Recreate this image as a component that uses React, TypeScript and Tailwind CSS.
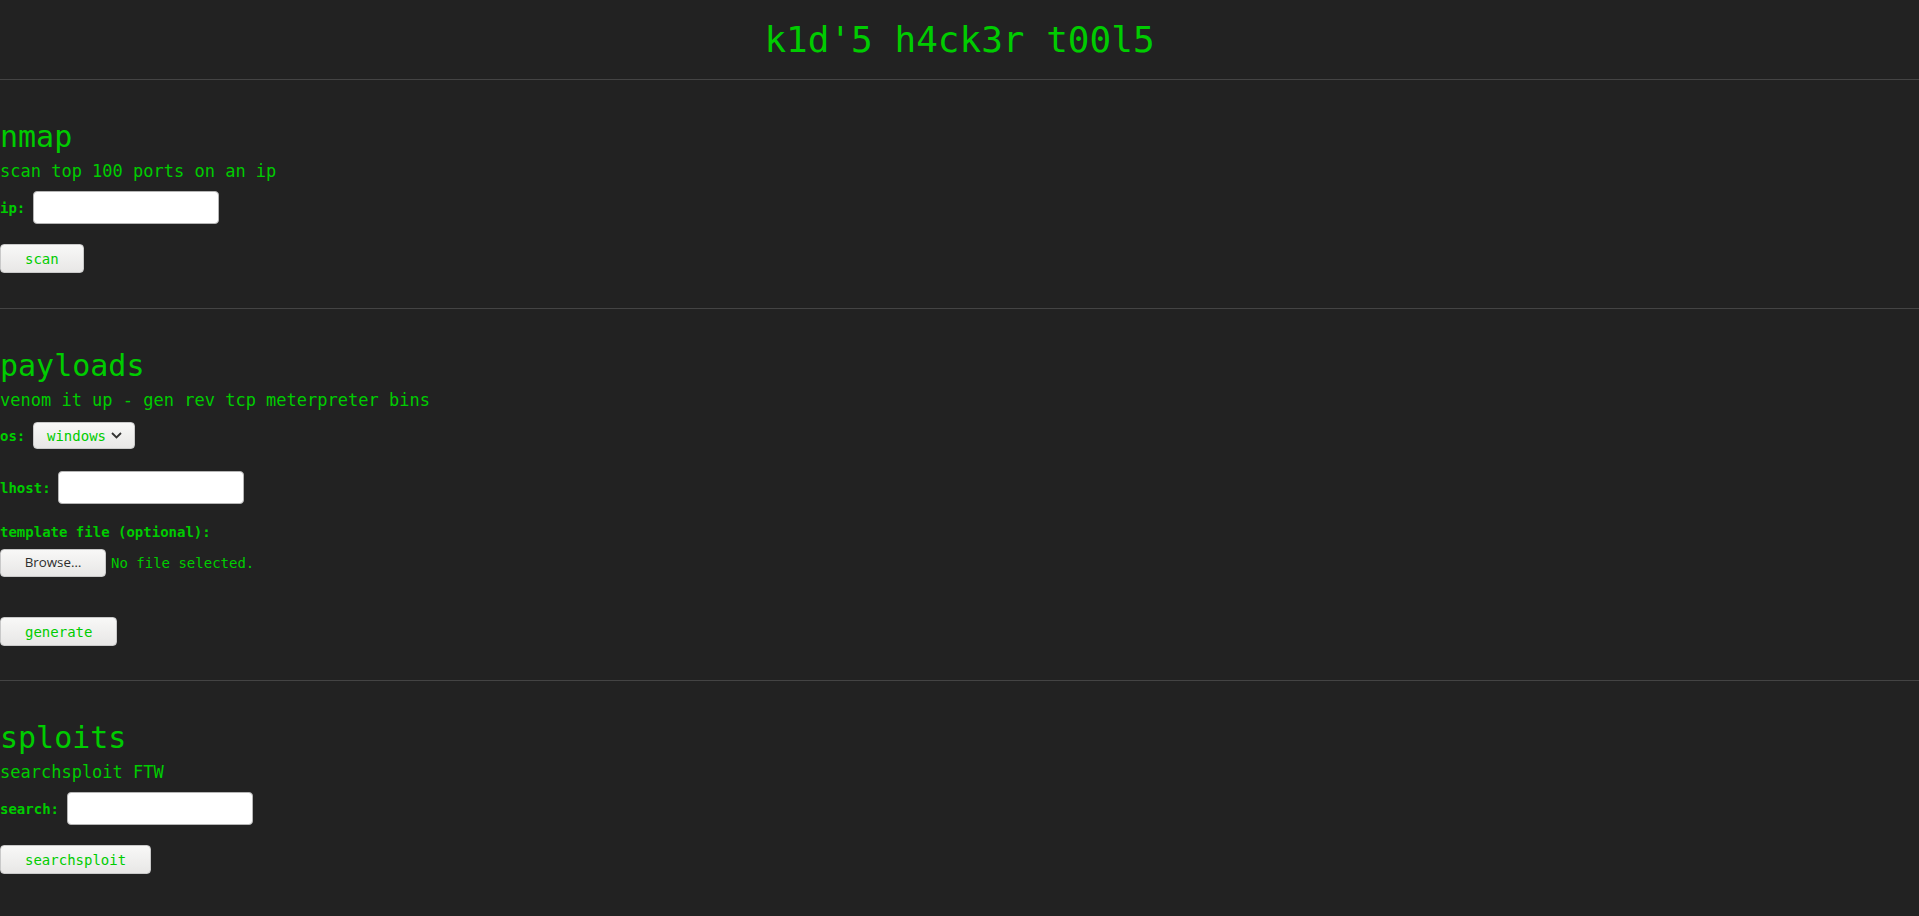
import React from "react";

function Btn({ label }: { label: string }) {
  return (
    <button className="h-[29px] px-[24px] rounded-[4px] border border-[#c9c9c9] bg-gradient-to-b from-[#f8f8f7] to-[#e8e7e6] text-[14px] leading-none text-[#00cc00] font-['DejaVu_Sans_Mono',monospace]">
      {label}
    </button>
  );
}

function TextInput() {
  return (
    <input
      type="text"
      className="h-[33px] w-[186px] rounded-[4px] border border-[#b5b5b5] bg-white px-2 text-[14px] text-black outline-none"
    />
  );
}

function Label({ text, className }: { text: string; className?: string }) {
  return <div className={"text-[14px] font-bold leading-[16px] " + (className ?? "")}>{text}</div>;
}

export default function App() {
  return (
    <div className="min-h-screen bg-[#222222] text-[#00cc00] font-['DejaVu_Sans_Mono',monospace]">
      <header className="h-[80px] border-b border-[#444444] flex items-center justify-center">
        <h1 className="text-[36px] leading-[42px] font-normal">k1d'5 h4ck3r t00l5</h1>
      </header>

      {/* nmap */}
      <section className="pt-[39px] pb-[35px] border-b border-[#444444]">
        <h2 className="text-[30px] leading-[35px]">nmap</h2>
        <p className="mt-[7px] text-[17px] leading-[20px]">scan top 100 ports on an ip</p>
        <div className="mt-[10px] flex items-center">
          <Label text="ip:" className="w-[33px]" />
          <TextInput />
        </div>
        <div className="mt-[20px] flex">
          <Btn label="scan" />
        </div>
      </section>

      {/* payloads */}
      <section className="pt-[39px] pb-[34px] border-b border-[#444444]">
        <h2 className="text-[30px] leading-[35px]">payloads</h2>
        <p className="mt-[7px] text-[17px] leading-[20px]">venom it up - gen rev tcp meterpreter bins</p>
        <div className="mt-[12px] flex items-center">
          <Label text="os:" className="w-[33px]" />
          <div className="h-[27px] w-[102px] rounded-[4px] border border-[#c9c9c9] bg-gradient-to-b from-[#f8f8f7] to-[#e8e7e6] flex items-center pl-[13px] pr-[12px] justify-between">
            <span className="text-[14px] leading-none">windows</span>
            <svg width="11" height="7" viewBox="0 0 11 7" fill="none">
              <path d="M1 1l4.5 4.5L10 1" stroke="#333" strokeWidth="1.8" />
            </svg>
          </div>
        </div>
        <div className="mt-[22px] flex items-center">
          <Label text="lhost:" className="w-[58px]" />
          <TextInput />
        </div>
        <Label text="template file (optional):" className="mt-[20px]" />
        <div className="mt-[9px] flex items-center">
          <div className="h-[28px] w-[106px] rounded-[4px] border border-[#c9c9c9] bg-gradient-to-b from-[#f8f8f7] to-[#e8e7e6] flex items-center justify-center text-[13.33px] text-[#2e2e2e] font-['Open_Sans',sans-serif]">
            Browse…
          </div>
          <span className="ml-[5px] text-[14px] leading-[16px]">No file selected.</span>
        </div>
        <div className="mt-[40px] flex">
          <Btn label="generate" />
        </div>
      </section>

      {/* sploits */}
      <section className="pt-[39px] pb-[35px]">
        <h2 className="text-[30px] leading-[35px]">sploits</h2>
        <p className="mt-[7px] text-[17px] leading-[20px]">searchsploit FTW</p>
        <div className="mt-[10px] flex items-center">
          <Label text="search:" className="w-[67px]" />
          <TextInput />
        </div>
        <div className="mt-[20px] flex">
          <Btn label="searchsploit" />
        </div>
      </section>
    </div>
  );
}
